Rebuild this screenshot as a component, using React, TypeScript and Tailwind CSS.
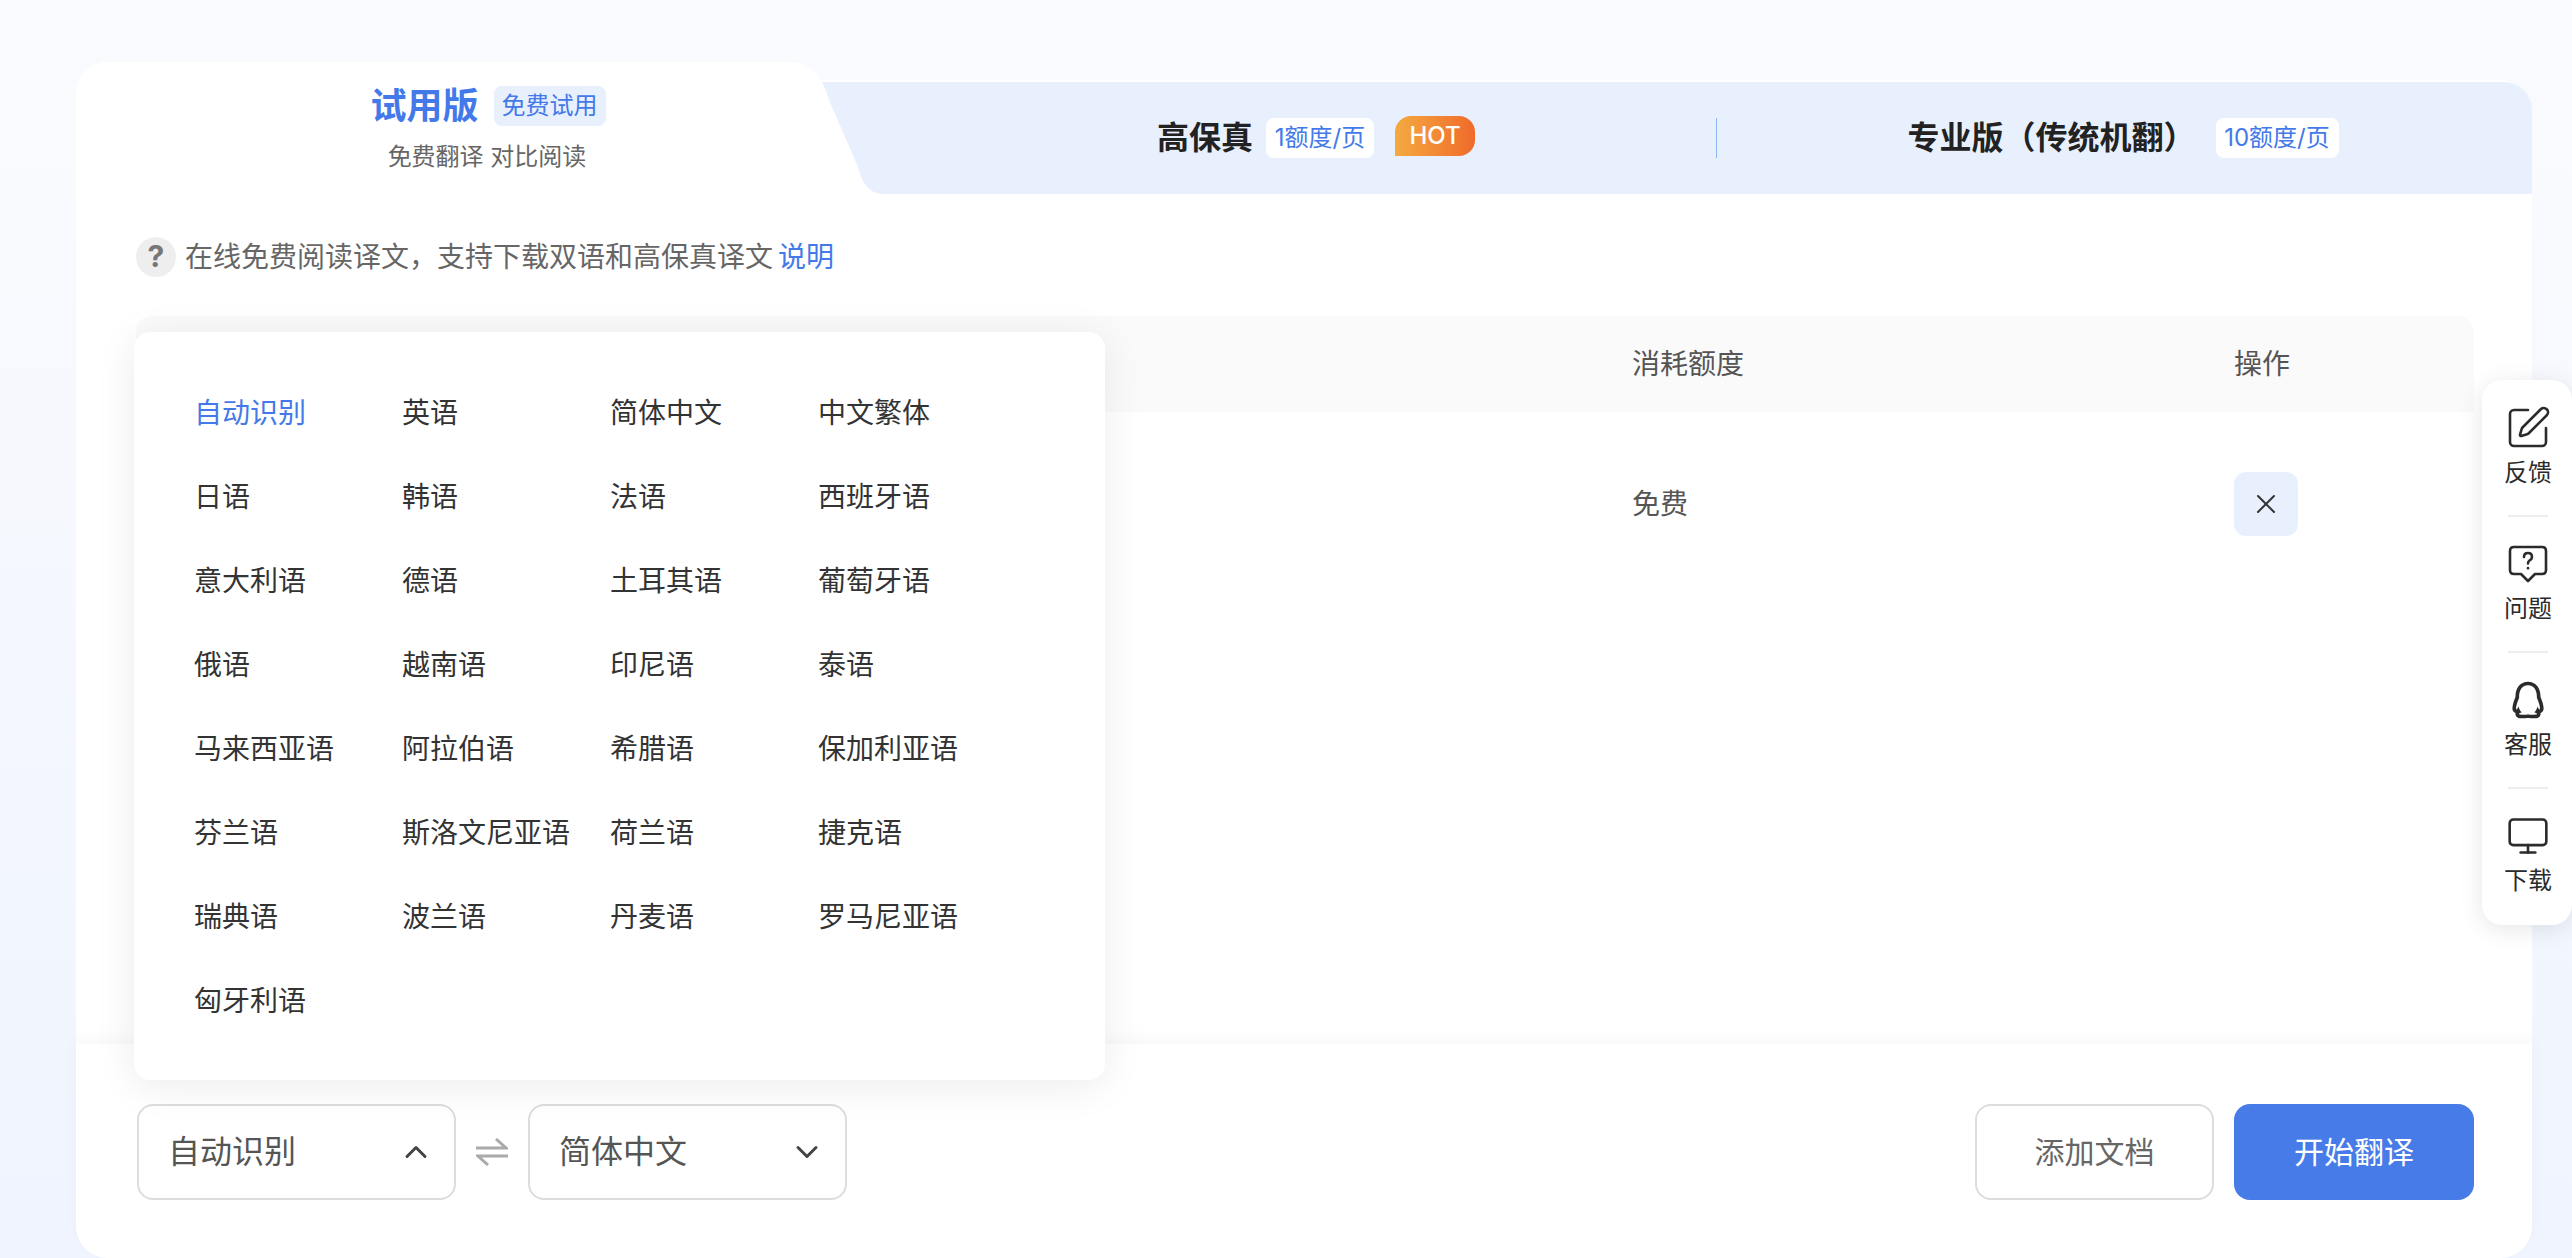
import { ChevronDown, ChevronUp, Monitor, SquarePen, X } from "lucide-react";
import { RiQqLine } from "react-icons/ri";

const LANGUAGES = [
  "自动识别", "英语", "简体中文", "中文繁体",
  "日语", "韩语", "法语", "西班牙语",
  "意大利语", "德语", "土耳其语", "葡萄牙语",
  "俄语", "越南语", "印尼语", "泰语",
  "马来西亚语", "阿拉伯语", "希腊语", "保加利亚语",
  "芬兰语", "斯洛文尼亚语", "荷兰语", "捷克语",
  "瑞典语", "波兰语", "丹麦语", "罗马尼亚语",
  "匈牙利语",
];

function TabCurve() {
  return (
    <svg width="94" height="132" viewBox="0 0 94 132" className="shrink-0 self-end">
      <rect x="0" y="18" width="94" height="2" fill="#ffffff" />
      <rect x="0" y="20" width="94" height="112" fill="#e8f0fe" />
      <path d="M0 0 C22 0 33 16 39 38 L68 105 C72 122 80 132 94 132 L0 132 Z" fill="#ffffff" />
    </svg>
  );
}

function CostChip({ children, width }: { children: string; width: string }) {
  return (
    <span className={`flex h-10 items-center justify-center rounded-lg bg-white text-2xl leading-none text-[#4379e8] ${width}`}>
      {children}
    </span>
  );
}

function HelpIcon() {
  return (
    <svg width="40" height="40" viewBox="0 0 40 40" fill="none" stroke="#2b2b2b" strokeWidth="2.6" strokeLinejoin="round" strokeLinecap="round">
      <path d="M6 3 H34 Q38 3 38 7 V26 Q38 30 34 30 H27 L20 37 L13 30 H6 Q2 30 2 26 V7 Q2 3 6 3 Z" />
      <path d="M16 13 Q16 9 20 9 Q24 9 24 13 Q24 15 21.5 16.5 Q20 17.5 20 19.5" />
      <path d="M20 24 V24.2" />
    </svg>
  );
}

function SideItem({ icon, label, last }: { icon: React.ReactNode; label: string; last?: boolean }) {
  return (
    <div className="flex flex-col items-center">
      <div className="flex h-10 w-10 items-center justify-center">{icon}</div>
      <span className="mt-[9px] text-2xl leading-8 text-[#2b2b2b]">{label}</span>
      {!last && <div className="mt-[26px] mb-[27px] h-[2px] w-10 bg-[#eeeeee]" />}
    </div>
  );
}

function SelectBox({ label, open }: { label: string; open?: boolean }) {
  return (
    <div className="flex h-24 w-[319px] items-center justify-between rounded-2xl border-2 border-[#dddddd] bg-white pl-[29px] pr-[20px]">
      <span className="text-[32px] text-[#555]">{label}</span>
      {open ? (
        <ChevronUp size={36} strokeWidth={2} color="#444" />
      ) : (
        <ChevronDown size={36} strokeWidth={2} color="#444" />
      )}
    </div>
  );
}

export default function App() {
  return (
    <div className="relative h-[1258px] w-full overflow-hidden bg-gradient-to-b from-[#fafbfe] to-[#eff4fe] pl-[76px] pt-[80px] font-[family-name:Inter,'Noto_Sans_CJK_SC',sans-serif]">
      <div className="relative flex h-[1178px] w-[2456px] flex-col rounded-[32px] bg-white">
        {/* tabs */}
        <div className="mt-[2px] flex h-[112px] items-stretch">
          <div className="flex h-[132px] w-[714px] shrink-0 flex-col items-center self-end rounded-tl-[32px] bg-white pl-[110px] pt-6">
            <div className="flex items-center gap-[15px]">
              <span className="text-[36px] font-bold leading-10 text-[#4379e8]">试用版</span>
              <span className="flex h-10 items-center rounded-lg bg-[#e8f0fe] px-2 text-2xl text-[#4379e8]">免费试用</span>
            </div>
            <p className="mt-[15px] pr-[2px] text-2xl leading-8 text-[#666]">免费翻译 对比阅读</p>
          </div>
          <TabCurve />
          <div className="flex flex-1 items-center rounded-tr-[28px] bg-[#e8f0fe]">
            <div className="flex w-[832px] items-center pl-[273px]">
              <span className="text-[32px] font-bold text-[#222]">高保真</span>
              <span className="ml-[13px]"><CostChip width="w-[108px]">1额度/页</CostChip></span>
              <span className="ml-[21px] mb-1 flex h-10 w-20 items-center justify-center rounded-t-2xl rounded-br-2xl bg-gradient-to-r from-[#f4a940] to-[#ef6a2b] text-2xl font-medium text-white">HOT</span>
            </div>
            <div className="h-10 w-px bg-[#8fb6f0]" />
            <div className="flex flex-1 items-center justify-center pr-[3px]">
              <span className="text-[32px] font-bold text-[#222]">专业版（传统机翻）</span>
              <span className="ml-[20px]"><CostChip width="w-[123px]">10额度/页</CostChip></span>
            </div>
          </div>
        </div>

        {/* hint */}
        <div className="mt-[42px] flex items-center px-[60px]">
          <span className="flex h-10 w-10 items-center justify-center rounded-full bg-[#eeeeee] text-[30px] font-bold text-[#777]">?</span>
          <span className="ml-[9px] pt-[1px] text-[28px] leading-10 text-[#666]">在线免费阅读译文，支持下载双语和高保真译文</span>
          <span className="ml-[5px] pt-[1px] text-[28px] leading-10 text-[#4379e8]">说明</span>
        </div>

        {/* table */}
        <div className="mt-[39px] flex-1 pl-[60px] pr-[58px]">
          <div className="grid h-24 grid-cols-[1496px_602px_1fr] items-center rounded-t-2xl bg-[#fafafa] text-[28px] text-[#555]">
            <span />
            <span>消耗额度</span>
            <span>操作</span>
          </div>
          <div className="mt-[60px] grid grid-cols-[1496px_602px_1fr] items-center text-[28px] text-[#555]">
            <span />
            <span>免费</span>
            <span className="flex h-16 w-16 items-center justify-center rounded-xl bg-[#e8f0fe]">
              <X size={32} strokeWidth={1.5} color="#333" />
            </span>
          </div>
        </div>

        {/* footer */}
        <div className="z-10 flex h-[214px] items-start justify-between rounded-b-[32px] bg-white pl-[61px] pr-[58px] pt-[60px] shadow-[0_-6px_14px_rgba(0,0,0,0.03)]">
          <div className="flex items-center">
            <SelectBox label="自动识别" open />
            <div className="flex w-[72px] justify-center">
              <svg width="32" height="28" viewBox="0 0 32 28" fill="none" stroke="#aaaaaa" strokeWidth="3">
                <path d="M0 10 H30 L20 1" />
                <path d="M32 18 H2 L12 27" />
              </svg>
            </div>
            <SelectBox label="简体中文" />
          </div>
          <div className="flex items-center gap-5">
            <button className="flex h-24 w-[239px] items-center justify-center rounded-2xl border-2 border-[#dddddd] bg-white text-[30px] text-[#666]">添加文档</button>
            <button className="flex h-24 w-[240px] items-center justify-center rounded-2xl bg-[#477ce8] text-[30px] text-white">开始翻译</button>
          </div>
        </div>

        {/* language dropdown */}
        <div className="absolute left-[58px] top-[252px] z-20 h-[748px] w-[971px] rounded-2xl bg-white pl-[60px] pt-[39px] shadow-[0_6px_40px_rgba(0,0,0,0.08)]">
          <div className="grid grid-cols-[208px_208px_208px_208px] auto-rows-[84px] items-center">
            {LANGUAGES.map((lang, i) => (
              <span key={lang} className={i === 0 ? "text-[28px] text-[#4379e8]" : "text-[28px] text-[#333]"}>
                {lang}
              </span>
            ))}
          </div>
        </div>
      </div>

      {/* side tools */}
      <div className="absolute right-0 top-[380px] z-30 flex w-[90px] flex-col items-center rounded-[20px] bg-white py-7 pl-[2px] shadow-[0_4px_24px_rgba(0,0,0,0.1)]">
        <SideItem icon={<SquarePen size={48} strokeWidth={1.3} color="#2b2b2b" className="shrink-0" />} label="反馈" />
        <SideItem icon={<HelpIcon />} label="问题" />
        <SideItem icon={<RiQqLine size={44} color="#2b2b2b" className="shrink-0" />} label="客服" />
        <SideItem icon={<Monitor size={44} strokeWidth={1.42} color="#2b2b2b" className="shrink-0" />} label="下载" last />
      </div>
    </div>
  );
}
